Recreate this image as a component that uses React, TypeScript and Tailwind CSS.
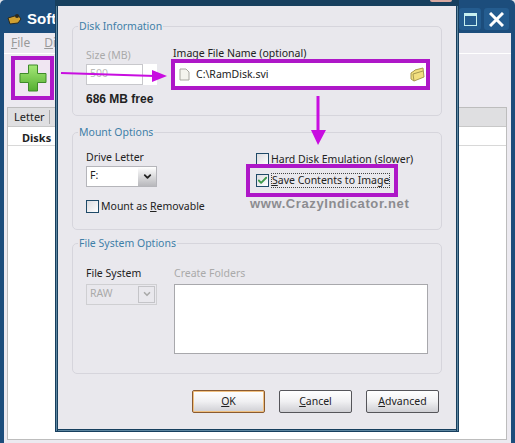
import type { ReactNode } from 'react';
import { ChevronDown, Check } from 'lucide-react';

// underlined access key, like a Win32 label
function Key({ children }: { children: ReactNode }) {
  return <span className="underline underline-offset-1">{children}</span>;
}

function GroupBox({ title, className, children }: { title: string; className: string; children: ReactNode }) {
  return (
    <fieldset className={`rounded-[5px] border border-[#d6d5dc] px-[13px] ${className}`}>
      <legend className="ml-[-8px] px-[1px] text-[#3f7fa8]">{title}</legend>
      {children}
    </fieldset>
  );
}

function CheckRow({ label, checked }: { label: ReactNode; checked?: boolean }) {
  return (
    <div className="flex items-center gap-[2px]">
      <div className="flex h-[13px] w-[13px] shrink-0 items-center justify-center border border-[#1f4a68] bg-gradient-to-br from-[#dcdce0] to-white">
        {checked && <Check className="h-[11px] w-[11px] text-[#3e9a4a]" strokeWidth={4} />}
      </div>
      {label}
    </div>
  );
}

function DialogButton({ label, primary }: { label: ReactNode; primary?: boolean }) {
  return (
    <div
      className={`flex h-[23px] w-[73px] items-center justify-center rounded-[2px] border bg-gradient-to-b from-white via-[#f0f0f2] to-[#cfcfd4] ${
        primary ? 'border-[#8a5a30] shadow-[inset_0_0_0_1px_#f0c080]' : 'border-[#55555a]'
      }`}
    >
      {label}
    </div>
  );
}

export default function App() {
  return (
    <div className="relative h-[443px] w-[515px] overflow-hidden bg-[#dfe3ea] font-['Noto_Sans',sans-serif] text-[10.5px] text-[#222]">
      {/* main window behind the dialog */}
      <div className="flex h-[443px] w-[515px] flex-col rounded-t-[5px] bg-[#1c4d7c] px-[4px]">
        <div className="flex h-[33px] shrink-0 items-center justify-between pl-[2px] pr-[2px] pt-[5px]">
          <div className="flex items-center gap-[5px]">
            <svg width="15" height="12" viewBox="0 0 15 12" className="ml-[1px]">
              <path d="M1 5 L11 2 L14 6 L11 10 L3 11 Z" fill="#d0a030" stroke="#2a2a20" />
              <circle cx="10" cy="3" r="2" fill="#2a2a20" />
            </svg>
            <span className="font-['Liberation_Sans',sans-serif] text-[15px] font-bold text-white">Soft</span>
          </div>
          <div className="flex gap-[3px]">
            <div className="flex h-[22px] w-[22px] items-center justify-center rounded-[3px] bg-[#245c8f]">
              <div className="h-[13px] w-[13px] border border-t-[3px] border-[#c8f0f0]" />
            </div>
            <div className="flex h-[22px] w-[25px] items-center justify-center rounded-[3px] bg-[#245c8f]">
              <svg width="15" height="15" viewBox="0 0 15 15">
                <path d="M1 1 L14 14 M14 1 L1 14" stroke="white" strokeWidth="3" />
              </svg>
            </div>
          </div>
        </div>
        <div className="flex flex-1 flex-col bg-[#eceaf0]">
          <div className="flex h-[21px] shrink-0 items-center gap-[14px] border-b border-white pl-[7px] text-[12px] text-[#999]">
            <span>
              <Key>F</Key>ile
            </span>
            <span>
              <Key>D</Key>i
            </span>
          </div>
          <div className="ml-[3px] mr-[4px] mt-[53px] h-[333px] border border-[#bdbdbd] bg-white">
            <div className="flex h-[19px] items-center border-b border-[#c8c8c8] bg-[#dfdfe1] pl-[6px] text-[11px] text-[#222]">
              <span className="w-[35px]">Letter</span>
              <span className="h-[14px] w-px bg-[#aaa]" />
            </div>
            <div className="h-[19px] border-b border-[#d8d8d8] pl-[14px] pt-[3px] text-[11px] font-bold text-[#222]">Disks</div>
          </div>
        </div>
      </div>

      {/* annotation: plus button */}
      <div className="absolute left-[11px] top-[56px] flex h-[44px] w-[43px] items-center justify-center border-[4px] border-[#ae17c8] bg-[#f0e6f2]">
        <svg width="28" height="28" viewBox="0 0 28 28">
          <defs>
            <linearGradient id="plusFill" x1="0" y1="0" x2="0" y2="1">
              <stop offset="0" stopColor="#a6e878" />
              <stop offset="1" stopColor="#54ae30" />
            </linearGradient>
          </defs>
          <path
            d="M9.5 1 H18.5 V9.5 H27 V18.5 H18.5 V27 H9.5 V18.5 H1 V9.5 H9.5 Z"
            fill="url(#plusFill)"
            stroke="#3f8a2a"
            strokeLinejoin="round"
          />
        </svg>
      </div>

      {/* dialog */}
      <div className="absolute left-[55px] top-0 flex h-[432px] w-[404px] flex-col border border-t-[6px] border-[#173f5e] bg-[#e9e8ed] px-[16px] pt-[13px] shadow-[inset_1px_0_0_#5d86a0,inset_2px_0_0_#173f5e,inset_-1px_0_0_#5d86a0,inset_-2px_0_0_#173f5e,inset_0_-1px_0_#5d86a0,inset_0_-2px_0_#173f5e]">
        <GroupBox title="Disk Information" className="h-[97px] shrink-0">
          <div className="flex gap-[16px] pt-[13px]">
            <div className="w-[71px]">
              <div className="text-[#aaa]">Size (MB)</div>
              <div className="flex w-[71px]">
                <div className="flex h-[21px] w-[57px] items-center border border-[#c8c8cc] bg-white pl-[3px] text-[#bbb]">500</div>
                <div className="h-[21px] w-[14px] bg-white" />
              </div>
              <div className="mt-[5px] whitespace-nowrap font-['Liberation_Sans',sans-serif] text-[12px] font-bold text-[#222]">686 MB free</div>
            </div>
            <div className="flex-1">
              <div className="mt-[-2px]">Image File Name (optional)</div>
            </div>
          </div>
        </GroupBox>
        <GroupBox title="Mount Options" className="mt-[9px] h-[105px] shrink-0">
          <div className="flex pt-[2px]">
            <div className="w-[170px]">
              <div className="mt-[7px]">Drive Letter</div>
              <div className="flex h-[21px] w-[71px] items-center justify-between border border-[#b5b5ba] bg-white pl-[3px]">
                F:
                <div className="flex h-[19px] w-[18px] items-center justify-center bg-gradient-to-b from-white to-[#b8b8bc]">
                  <ChevronDown className="h-[11px] w-[11px] text-[#222]" strokeWidth={4} />
                </div>
              </div>
              <div className="mt-[12px]">
                <CheckRow
                  label={
                    <span>
                      Mount as <Key>R</Key>emovable
                    </span>
                  }
                />
              </div>
            </div>
            <div className="pt-[9px]">
              <CheckRow label={<span className="whitespace-nowrap">Hard Disk Emulation (slower)</span>} />
            </div>
          </div>
        </GroupBox>
        <GroupBox title="File System Options" className="mt-[6px] h-[138px] shrink-0">
          <div className="flex gap-[17px] pt-[14px]">
            <div className="w-[71px]">
              <div>File System</div>
              <div className="mt-[2px] flex h-[21px] items-center justify-between border border-[#cfcfd2] pl-[3px] text-[#aaa]">
                RAW
                <div className="mr-[1px] flex h-[17px] w-[17px] items-center justify-center border border-[#c4c4c8]">
                  <ChevronDown className="h-[10px] w-[10px] text-[#aaa]" strokeWidth={4} />
                </div>
              </div>
            </div>
            <div className="w-[254px]">
              <div className="text-[#aaa]">Create Folders</div>
              <div className="mt-[2px] h-[70px] border border-[#a8a8ac] bg-white" />
            </div>
          </div>
        </GroupBox>
        <div className="mt-[16px] flex justify-end gap-[14px] pr-[3px]">
          <DialogButton
            primary
            label={
              <span>
                <Key>O</Key>K
              </span>
            }
          />
          <DialogButton
            label={
              <span>
                <Key>C</Key>ancel
              </span>
            }
          />
          <DialogButton
            label={
              <span>
                <Key>A</Key>dvanced
              </span>
            }
          />
        </div>
      </div>

      {/* close button of the dialog, cut off by the crop */}
      <div className="absolute left-[430px] top-0 h-[2px] w-[22px] rounded-b-[2px] bg-[#d8a8a0]" />

      {/* annotation: image file box */}
      <div className="absolute left-[171px] top-[59px] flex h-[31px] w-[259px] items-center justify-between border-[4px] border-[#ae17c8] bg-white pl-[4px] pr-[1px] text-[#222]">
        <div className="flex items-center gap-[6px]">
          <svg width="11" height="13" viewBox="0 0 11 13">
            <path d="M1 1 H7 L10 4 V12 H1 Z" fill="#f4f4ee" stroke="#a8a8a0" />
          </svg>
          C:\RamDisk.svi
        </div>
        <svg width="15" height="15" viewBox="0 0 15 15">
          <path d="M1 6 L4 4 L5 3 L13 1 L14 10 L4 14 L1 12 Z" fill="#f2df80" stroke="#a89a50" />
          <path d="M4 14 L3 7 L13 4" fill="none" stroke="#a89a50" />
        </svg>
      </div>

      {/* annotation: save contents checkbox */}
      <div className="absolute left-[246px] top-[164px] flex h-[33px] w-[152px] items-center border-[4px] border-[#ae17c8] pl-[6px]">
        <CheckRow
          checked
          label={
            <span className="whitespace-nowrap border border-dotted border-[#444] leading-[13px]">
              <Key>S</Key>ave Contents to Image
            </span>
          }
        />
      </div>
      <div className="absolute left-[250px] top-[194px] font-['Liberation_Sans',sans-serif] text-[13px] font-bold tracking-[0.6px] text-[#8c8c90]">
        www.CrazyIndicator.net
      </div>

      {/* annotation arrows */}
      <svg className="absolute left-0 top-0" width="515" height="443" viewBox="0 0 515 443">
        <path d="M61 73 L155 76" stroke="#c80ee0" strokeWidth="2" />
        <path d="M152 70 L167 76 L152 82 Z" fill="#c80ee0" />
        <path d="M318 96 V134" stroke="#c80ee0" strokeWidth="3" />
        <path d="M311 130 H326 L318 145 Z" fill="#c80ee0" />
      </svg>
    </div>
  );
}
